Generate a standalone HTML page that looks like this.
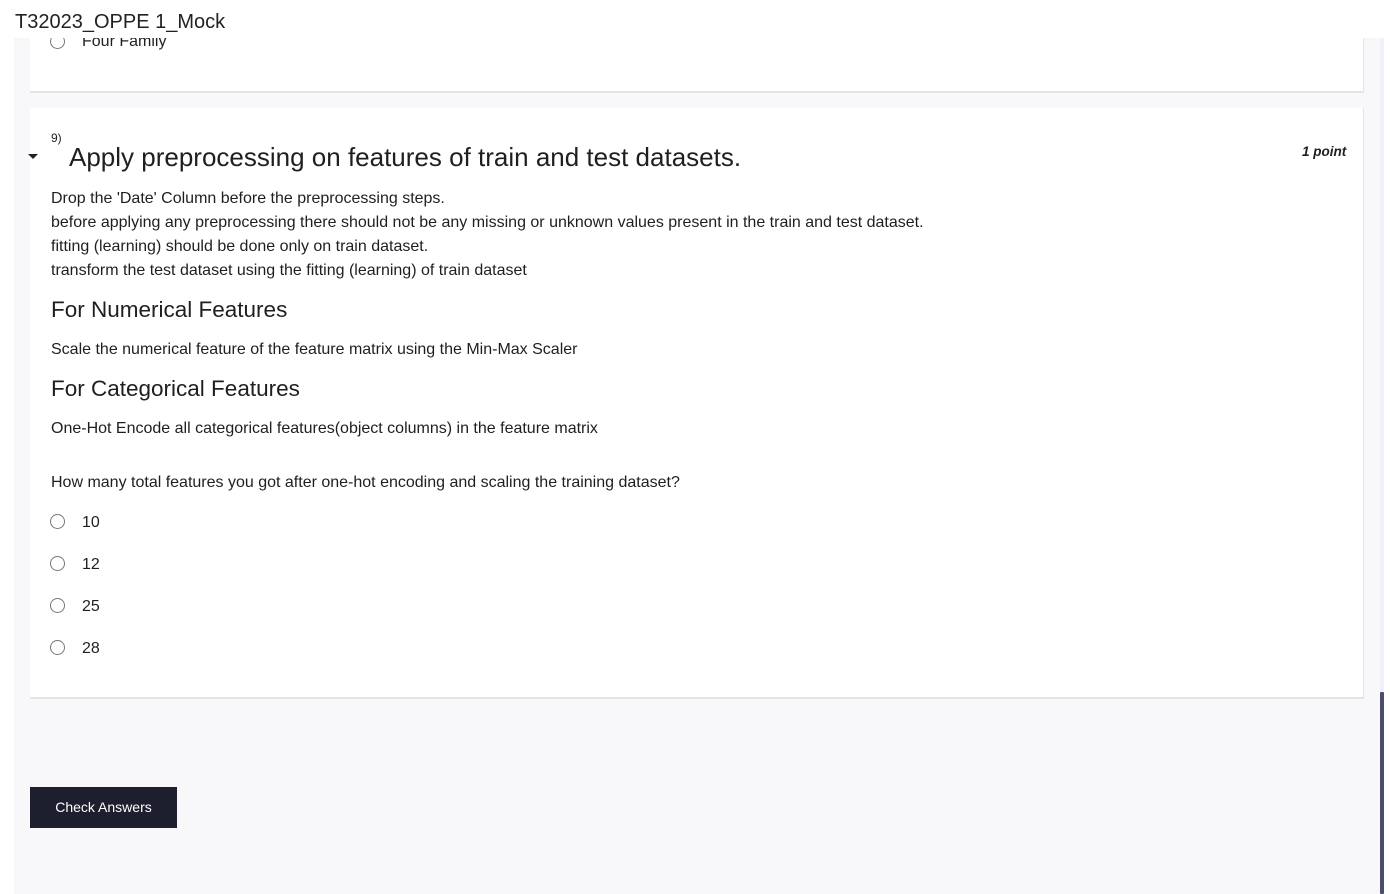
<!DOCTYPE html>
<html><head><meta charset="utf-8"><style>
*{margin:0;padding:0;box-sizing:border-box}
body{width:1390px;height:894px;background:#fff;font-family:"Liberation Sans",sans-serif;color:#1f1f1f;position:relative;overflow:hidden}
.bg{position:absolute;left:14px;top:38px;width:1366px;height:856px;background:#f8f8fa}
.track{position:absolute;left:1380px;top:38px;width:4px;height:856px;background:#eef0fa}
.thumb{position:absolute;left:1380px;top:692px;width:4px;height:202px;background:#4a4e6a;border-radius:1px}
.card{position:absolute;left:30px;width:1334px;background:#fff;border-right:1px solid #e4e4e4;border-bottom:2px solid #e4e4e4}
.band{position:absolute;left:0;top:0;width:1390px;height:38px;background:#fff;z-index:2}
.hdr{position:absolute;left:15px;top:11px;font-size:20px;color:#222;z-index:3}
.t{position:absolute;font-size:16px;color:#1f1f1f;white-space:nowrap}
.r{position:absolute;left:50px;width:15px;height:15px;border:1px solid #777;border-radius:50%;background:#fff}
.btn{position:absolute;left:30px;top:787px;width:147px;height:41px;background:#1e1f2e;color:#fff;font-size:14px;text-align:center;line-height:41px}
</style></head><body>
<div class="bg"></div>
<div class="track"></div><div class="thumb"></div>
<div class="card" style="top:38px;height:55px"></div>
<div class="r" style="top:34px"></div>
<div class="t" style="left:82px;top:33px">Four Family</div>
<div class="band"></div>
<div class="hdr">T32023_OPPE 1_Mock</div>
<div class="card" style="top:108px;height:591px"></div>
<div class="t" style="left:51px;top:131px;font-size:12px">9)</div>
<div style="position:absolute;left:28px;top:154px;width:0;height:0;border-left:5px solid transparent;border-right:5px solid transparent;border-top:5px solid #222"></div>
<div class="t" style="left:69px;top:142px;font-size:26px">Apply preprocessing on features of train and test datasets.</div>
<div class="t" style="left:1302px;top:144px;font-size:13.5px;font-weight:bold;font-style:italic">1 point</div>
<div class="t" style="left:51px;top:190px">Drop the 'Date' Column before the preprocessing steps.</div>
<div class="t" style="left:51px;top:214px">before applying any preprocessing there should not be any missing or unknown values present in the train and test dataset.</div>
<div class="t" style="left:51px;top:238px">fitting (learning) should be done only on train dataset.</div>
<div class="t" style="left:51px;top:262px">transform the test dataset using the fitting (learning) of train dataset</div>
<div class="t" style="left:51px;top:297px;font-size:22.5px">For Numerical Features</div>
<div class="t" style="left:51px;top:341px">Scale the numerical feature of the feature matrix using the Min-Max Scaler</div>
<div class="t" style="left:51px;top:376px;font-size:22.5px">For Categorical Features</div>
<div class="t" style="left:51px;top:420px">One-Hot Encode all categorical features(object columns) in the feature matrix</div>
<div class="t" style="left:51px;top:474px">How many total features you got after one-hot encoding and scaling the training dataset?</div>
<div class="r" style="top:514px"></div><div class="t" style="left:82px;top:514px">10</div>
<div class="r" style="top:556px"></div><div class="t" style="left:82px;top:556px">12</div>
<div class="r" style="top:598px"></div><div class="t" style="left:82px;top:598px">25</div>
<div class="r" style="top:640px"></div><div class="t" style="left:82px;top:640px">28</div>
<div class="btn">Check Answers</div>
</body></html>
